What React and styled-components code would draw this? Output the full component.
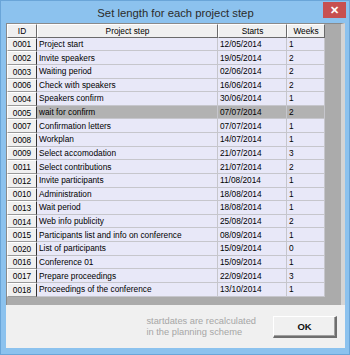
import React from 'react'
import styled, { createGlobalStyle } from 'styled-components'

const GlobalStyle = createGlobalStyle`
    html, body {
        margin: 0;
        padding: 0;
        background: #8cc2ee;
    }
    * {
        box-sizing: border-box;
    }
`;

const Window = styled.div`
    width: 350px;
    height: 355px;
    background: #8cc2ee;
    border: 1px solid #6aa5d8;
    display: flex;
    flex-direction: column;
    padding: 0 4px 6px 5px;
    font-family: "Liberation Sans", Arial, sans-serif;
`;

const TitleBar = styled.div`
    height: 22px;
    display: grid;
    grid-template-columns: 1fr auto 1fr;
    align-items: center;
`;

const Title = styled.div`
    grid-column: 2;
    font-size: 11.3px;
    color: #2b2b2b;
    padding-top: 1px;
`;

const CloseButton = styled.div`
    grid-column: 3;
    justify-self: end;
    align-self: start;
    margin-top: 1px;
    margin-right: -1px;
    width: 23px;
    height: 16px;
    background: #c75050;
    color: #fff;
    font-size: 11px;
    font-weight: bold;
    display: flex;
    align-items: center;
    justify-content: center;
`;

const Client = styled.div`
    flex: 1;
    display: flex;
    flex-direction: column;
    background: #f0f0f0;
`;

const GridArea = styled.div`
    height: 282px;
    background: #ababab;
    border-left: 1px solid #8a8a8a;
    border-top: 1px solid #8a8a8a;
    border-right: 4px solid #d4d4d4;
    overflow: hidden;
`;

const Table = styled.div`
    display: grid;
    grid-template-columns: 30px 181px 69px 38px;
    grid-auto-rows: 13.63px;
    width: 318px;
`;

const HeadCell = styled.div`
    background: #f0f0f0;
    border-top: 1px solid #ffffff;
    border-left: 1px solid #ffffff;
    border-right: 1px solid #6a6a6a;
    border-bottom: 1px solid #6a6a6a;
    font-size: 8.3px;
    color: #000;
    display: flex;
    align-items: center;
    justify-content: ${(props) => props.align === "left" ? "flex-start" : "center"};
    padding: 0 3px;
    white-space: nowrap;
    height: 14px;
`;

const IdCell = styled.div`
    background: #f0f0f0;
    border-top: 1px solid #ffffff;
    border-left: 1px solid #ffffff;
    border-right: 1px solid #303030;
    border-bottom: 1px solid #9a9a9a;
    font-size: 8.3px;
    color: #000;
    display: flex;
    align-items: center;
    justify-content: center;
    white-space: nowrap;
`;

const Cell = styled.div`
    background: ${(props) => props.selected ? "#b2b2b2" : "#e8e8f8"};
    border-right: 1px solid #c6c6cc;
    border-bottom: 1px solid #c6c6cc;
    font-size: 8.3px;
    color: #000;
    display: flex;
    align-items: center;
    padding-left: 2px;
    white-space: nowrap;
    overflow: hidden;
`;

const BottomPanel = styled.div`
    flex: 1;
    display: flex;
    align-items: center;
    justify-content: flex-end;
    gap: 17px;
    padding-right: 8px;
`;

const Note = styled.div`
    font-size: 9.3px;
    line-height: 11px;
    color: #a6a6a6;
    margin-top: 1px;
`;

const OkButton = styled.button`
    width: 64px;
    height: 22px;
    background: #f0f0f0;
    border-top: 1px solid #ffffff;
    border-left: 1px solid #ffffff;
    border-right: 2px solid #6e6e6e;
    border-bottom: 2px solid #6e6e6e;
    box-shadow: inset -1px -1px 0 #a0a0a0;
    font-family: "Liberation Sans", Arial, sans-serif;
    font-size: 9.5px;
    font-weight: bold;
    color: #111;
    padding: 0;
`;

const steps = [
    ["0001", "Project start", "12/05/2014", "1"],
    ["0002", "Invite speakers", "19/05/2014", "2"],
    ["0003", "Waiting period", "02/06/2014", "2"],
    ["0006", "Check with speakers", "16/06/2014", "2"],
    ["0004", "Speakers confirm", "30/06/2014", "1"],
    ["0005", "wait for confirm", "07/07/2014", "2"],
    ["0007", "Confirmation letters", "07/07/2014", "1"],
    ["0008", "Workplan", "14/07/2014", "1"],
    ["0009", "Select accomodation", "21/07/2014", "3"],
    ["0011", "Select contributions", "21/07/2014", "2"],
    ["0012", "Invite participants", "11/08/2014", "1"],
    ["0010", "Administration", "18/08/2014", "1"],
    ["0013", "Wait period", "18/08/2014", "1"],
    ["0014", "Web info publicity", "25/08/2014", "2"],
    ["0015", "Participants list and info on conference", "08/09/2014", "1"],
    ["0020", "List of participants", "15/09/2014", "0"],
    ["0016", "Conference 01", "15/09/2014", "1"],
    ["0017", "Prepare proceedings", "22/09/2014", "3"],
    ["0018", "Proceedings of the conference", "13/10/2014", "1"],
];

const SELECTED = "0005";

const App = () => {
  return (
    <>
        <GlobalStyle/>
        <Window>
            <TitleBar>
                <Title>Set length for each project step</Title>
                <CloseButton>✕</CloseButton>
            </TitleBar>
            <Client>
                <GridArea>
                    <Table>
                        <HeadCell>ID</HeadCell>
                        <HeadCell>Project step</HeadCell>
                        <HeadCell>Starts</HeadCell>
                        <HeadCell>Weeks</HeadCell>
                        {steps.map(([id, name, starts, weeks]) => (
                            <React.Fragment key={id}>
                                <IdCell>{id}</IdCell>
                                <Cell selected={id === SELECTED}>{name}</Cell>
                                <Cell selected={id === SELECTED}>{starts}</Cell>
                                <Cell selected={id === SELECTED}>{weeks}</Cell>
                            </React.Fragment>
                        ))}
                    </Table>
                </GridArea>
                <BottomPanel>
                    <Note>
                        startdates are recalculated<br/>
                        in the planning scheme
                    </Note>
                    <OkButton>OK</OkButton>
                </BottomPanel>
            </Client>
        </Window>
    </>
  )
}

export default App
